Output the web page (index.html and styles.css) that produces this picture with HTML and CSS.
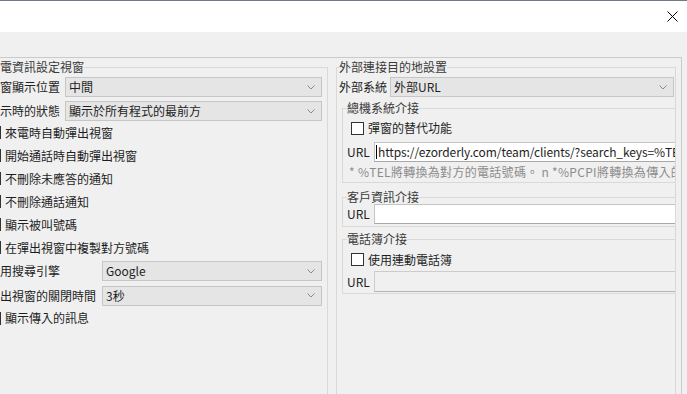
FILE: index.html
```html
<!DOCTYPE html>
<html lang="zh-Hant">
<head>
    <meta charset="UTF-8">
    <meta name="viewport" content="width=device-width, initial-scale=1.0">
    <title>設定</title>
    <link rel="stylesheet" href="styles.css">
</head>
<body>
    <div class="window">
        <div class="titlebar">
            <button class="close-btn" title="關閉">
                <svg width="11" height="11" viewBox="0 0 11 11"><path d="M0.5 0.5 L10.5 10.5 M10.5 0.5 L0.5 10.5" stroke="#000" stroke-width="1" fill="none"/></svg>
            </button>
        </div>
        <div class="toolstrip"></div>

        <div class="tab-page">
            <!-- left: popup window settings -->
            <fieldset class="group">
                <legend>來電資訊設定視窗</legend>
                <div class="field-row">
                    <label class="field-label">彈窗顯示位置</label>
                    <div class="combo"><span>中間</span><svg class="chevron" width="8" height="5" viewBox="0 0 8 5"><path d="M0.5 0.5 L4 4 L7.5 0.5"/></svg></div>
                </div>
                <div class="field-row tight">
                    <label class="field-label">顯示時的狀態</label>
                    <div class="combo"><span>顯示於所有程式的最前方</span><svg class="chevron" width="8" height="5" viewBox="0 0 8 5"><path d="M0.5 0.5 L4 4 L7.5 0.5"/></svg></div>
                </div>
                <div class="check-row"><span class="check"></span>來電時自動彈出視窗</div>
                <div class="check-row"><span class="check"></span>開始通話時自動彈出視窗</div>
                <div class="check-row"><span class="check"></span>不刪除未應答的通知</div>
                <div class="check-row"><span class="check"></span>不刪除通話通知</div>
                <div class="check-row"><span class="check"></span>顯示被叫號碼</div>
                <div class="check-row"><span class="check"></span>在彈出視窗中複製對方號碼</div>
                <div class="field-row">
                    <label class="field-label wide">使用搜尋引擎</label>
                    <div class="combo"><span>Google</span><svg class="chevron" width="8" height="5" viewBox="0 0 8 5"><path d="M0.5 0.5 L4 4 L7.5 0.5"/></svg></div>
                </div>
                <div class="field-row loose">
                    <label class="field-label wide">彈出視窗的關閉時間</label>
                    <div class="combo"><span>3秒</span><svg class="chevron" width="8" height="5" viewBox="0 0 8 5"><path d="M0.5 0.5 L4 4 L7.5 0.5"/></svg></div>
                </div>
                <div class="check-row last"><span class="check"></span>顯示傳入的訊息</div>
            </fieldset>

            <!-- right: external link targets -->
            <fieldset class="group link-group">
                <legend>外部連接目的地設置</legend>
                <div class="field-row">
                    <label class="field-label short">外部系統</label>
                    <div class="combo"><span>外部URL</span><svg class="chevron" width="8" height="5" viewBox="0 0 8 5"><path d="M0.5 0.5 L4 4 L7.5 0.5"/></svg></div>
                </div>

                <fieldset class="subgroup pbx">
                    <legend>總機系統介接</legend>
                    <div class="check-row sub-check"><span class="check"></span>彈窗的替代功能</div>
                    <div class="url-row">
                        <label class="url-label">URL</label>
                        <div class="url-input"><span class="caret"></span><span class="url-text">https://ezorderly.com/team/clients/?search_keys=%TEL</span></div>
                    </div>
                    <div class="hint">* %TEL將轉換為對方的電話號碼。 n *%PCPI將轉換為傳入的訊息</div>
                </fieldset>

                <fieldset class="subgroup crm">
                    <legend>客戶資訊介接</legend>
                    <div class="url-row">
                        <label class="url-label">URL</label>
                        <div class="url-input"></div>
                    </div>
                </fieldset>

                <fieldset class="subgroup phonebook">
                    <legend>電話簿介接</legend>
                    <div class="check-row sub-check"><span class="check"></span>使用連動電話簿</div>
                    <div class="url-row">
                        <label class="url-label">URL</label>
                        <div class="url-input disabled"></div>
                    </div>
                </fieldset>
            </fieldset>
        </div>
    </div>
</body>
</html>
```

FILE: styles.css
```css
* {
    box-sizing: border-box;
}
html, body {
    margin: 0;
    padding: 0;
}
body {
    width: 687px;
    height: 394px;
    overflow: hidden;
    background-color: #f0f0f0;
    font-family: "Noto Sans CJK TC", "Noto Sans", sans-serif;
    font-size: 12px;
    line-height: 14px;
    color: #1e1e1e;
}
.titlebar {
    height: 32px;
    background-color: #fff;
    border-top: 1px solid #6f7988;
    display: flex;
    justify-content: flex-end;
    align-items: center;
    padding-right: 9px;
}
.close-btn {
    border: none;
    background: none;
    padding: 0;
    display: flex;
}
.toolstrip {
    height: 25px;
}
.tab-page {
    margin-left: -20px;
    width: 702px;
    height: 340px;
    border-top: 1px solid #cacaca;
    border-right: 1px solid #cacaca;
    padding: 2px 5px 0 5px;
    display: grid;
    grid-template-columns: 343px 340px;
    column-gap: 8px;
}
.group {
    margin: 0;
    min-width: 0;
    height: 340px;
    border: 1px solid #d9d9d9;
    padding: 1px 5px 0 2px;
}
.group legend,
.subgroup legend {
    padding: 0;
    color: #3a3a3a;
    line-height: 14px;
    white-space: nowrap;
}
.link-group {
    padding-right: 1px;
    overflow: hidden;
}
.field-row {
    display: flex;
    align-items: center;
    height: 24px;
}
.field-row.tight {
    margin-bottom: -2px;
}
.field-row.loose {
    height: 25px;
}
.field-label {
    width: 77px;
    flex: none;
    white-space: nowrap;
}
.field-label.wide {
    width: 114px;
}
.field-label.short {
    width: 51px;
}
.combo {
    flex: 1;
    height: 20px;
    background-color: #e5e5e5;
    border: 1px solid #c6c6c6;
    display: flex;
    align-items: center;
    justify-content: space-between;
    padding: 0 6px 0 3px;
    white-space: nowrap;
}
.chevron path {
    fill: none;
    stroke: #8c8c8c;
    stroke-width: 1;
}
.check-row {
    display: flex;
    align-items: center;
    gap: 4px;
    height: 23px;
    white-space: nowrap;
}
.check-row.last {
    height: 20px;
}
.check {
    width: 13px;
    height: 13px;
    flex: none;
    border: 1px solid #333;
    background-color: #fff;
}
.subgroup {
    min-width: 0;
    margin: 2px -30px 0 3px;
    border: 1px solid #d9d9d9;
    padding: 0 0 2px 4px;
}
.subgroup.crm {
    margin-top: 7px;
}
.subgroup.phonebook {
    margin-top: 5px;
    padding-top: 2px;
    padding-bottom: 1px;
}
.sub-check {
    padding-left: 4px;
}
.pbx .sub-check {
    height: 26px;
}
.url-row {
    display: flex;
    align-items: center;
    height: 22px;
}
.crm .url-row {
    height: 20px;
}
.phonebook .url-row {
    height: 21px;
}
.url-label {
    width: 27px;
    flex: none;
}
.url-input {
    flex: 1;
    height: 20px;
    background-color: #fff;
    border: 1px solid #c4c4c4;
    border-bottom-color: #a8a8a8;
    padding-left: 1px;
    display: flex;
    align-items: center;
    white-space: nowrap;
    overflow: hidden;
}
.url-text {
    letter-spacing: -0.1px;
}
.phonebook .url-input {
    height: 21px;
}
.url-input.disabled {
    background-color: #f0f0f0;
    border-color: #cccccc;
    border-bottom-color: #b4b4b4;
}
.caret {
    width: 1px;
    height: 14px;
    margin-right: 1px;
    background-color: #000;
    flex: none;
}
.hint {
    height: 17px;
    display: flex;
    align-items: center;
    padding-left: 2px;
    color: #8c8c8c;
    letter-spacing: 0.3px;
    white-space: nowrap;
}
```
